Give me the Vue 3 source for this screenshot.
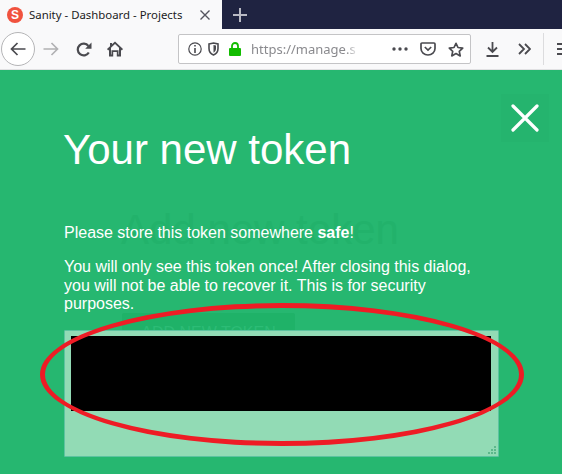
<template>
  <div class="browser">
    <!-- tab strip -->
    <div class="tabstrip">
      <div class="tab">
        <span class="favicon">S</span>
        <span class="tab-title">Sanity - Dashboard - Projects</span>
        <svg class="tab-close" width="10" height="10" viewBox="0 0 10 10">
          <path d="M0.5 0.5L9.5 9.5M9.5 0.5L0.5 9.5" stroke="#55555f" stroke-width="1.4" fill="none"/>
        </svg>
      </div>
      <svg class="new-tab" width="14" height="14" viewBox="0 0 14 14">
        <path d="M7 0V14M0 7H14" stroke="#b9bac4" stroke-width="2" fill="none"/>
      </svg>
    </div>

    <!-- toolbar -->
    <div class="toolbar">
      <div class="back-btn">
        <svg width="16" height="14" viewBox="0 0 16 14">
          <path d="M15.500 7H1.500M7.500 1L1.500 7l6 6" stroke="#4a4a4f" stroke-width="1.700" fill="none"/>
        </svg>
      </div>
      <svg class="forward" width="16" height="14" viewBox="0 0 16 14">
        <path d="M0.500 7H14.500M8.500 1L14.500 7l-6 6" stroke="#b1b1b3" stroke-width="1.700" fill="none"/>
      </svg>
      <svg class="reload" width="16" height="15" viewBox="0 0 16 15">
        <path d="M12.800 10.500A5.900 5.900 0 1 1 12.400 4" stroke="#4a4a4f" stroke-width="2.200" fill="none"/>
        <path d="M15.500 0.500V6.800H9.200Z" fill="#4a4a4f"/>
      </svg>
      <svg class="home" width="16" height="16" viewBox="0 0 16 16">
        <path d="M8 0.500L16 8 14.800 9.400 14 8.700V15.500H9.800V11H6.200V15.500H2V8.700L1.200 9.400 0 8 3 5.200V2H5V3.300ZM8 3L4 6.800V13.600H4.500V9.200H11.500V13.600H12V6.800Z" fill="#4a4a4f"/>
      </svg>

      <div class="urlbar">
        <svg class="info" width="14" height="14" viewBox="0 0 14 14">
          <circle cx="7" cy="7" r="6.200" stroke="#4a4a4f" stroke-width="1.200" fill="none"/>
          <path d="M7 6V11M7 3V4.600" stroke="#4a4a4f" stroke-width="1.600" fill="none"/>
        </svg>
        <svg class="shield" width="11" height="14" viewBox="0 0 11 14">
          <path d="M1 2L5.500 1 10 2V6.500C10 9.500 8 12 5.500 13 3 12 1 9.500 1 6.500Z" stroke="#4a4a4f" stroke-width="1.600" fill="none"/>
          <path d="M5.500 3L8 3.500V6.500C8 8.500 7 10 5.500 10.800Z" fill="#4a4a4f"/>
        </svg>
        <svg class="lock" width="12" height="14" viewBox="0 0 12 14">
          <path d="M3 6V4A3 3 0 0 1 9 4V6" stroke="#12bc00" stroke-width="1.800" fill="none"/>
          <rect x="0" y="6" width="12" height="8" rx="1" fill="#12bc00"/>
        </svg>
        <span class="url">https://manage.s</span>
        <svg class="dots" width="16" height="4" viewBox="0 0 16 4">
          <circle cx="2" cy="2" r="1.700" fill="#4a4a4f"/>
          <circle cx="8" cy="2" r="1.700" fill="#4a4a4f"/>
          <circle cx="14" cy="2" r="1.700" fill="#4a4a4f"/>
        </svg>
        <svg class="pocket" width="16" height="14" viewBox="0 0 16 14">
          <path d="M1 2Q1 1 2 1H14Q15 1 15 2V6.500A7 6.500 0 0 1 1 6.500Z" stroke="#4a4a4f" stroke-width="1.700" fill="none"/>
          <path d="M4.800 5L8 8 11.200 5" stroke="#4a4a4f" stroke-width="1.700" fill="none"/>
        </svg>
        <svg class="star" width="16" height="15" viewBox="0 0 16 15">
          <path d="M8 1.300L10 5.500 14.700 6.100 11.300 9.300 12.200 13.900 8 11.600 3.800 13.900 4.700 9.300 1.300 6.100 6 5.500Z" stroke="#4a4a4f" stroke-width="1.700" stroke-linejoin="round" fill="none"/>
        </svg>
      </div>

      <svg class="download" width="13" height="16" viewBox="0 0 13 16">
        <path d="M6.500 1V11M2 6.500L6.500 11 11 6.500M0.500 15H12.500" stroke="#4a4a4f" stroke-width="1.800" fill="none"/>
      </svg>
      <svg class="overflow" width="13" height="12" viewBox="0 0 13 12">
        <path d="M1 1L6 6 1 11M7 1L12 6 7 11" stroke="#4a4a4f" stroke-width="1.800" fill="none"/>
      </svg>
      <div class="sep"></div>
      <div class="hamburger"><i></i><i></i><i></i></div>
    </div>

    <!-- token dialog over the page -->
    <div class="dialog">
      <!-- page content showing through -->
      <div class="ghost-title">Add new token</div>
      <div class="ghost-btn">ADD NEW TOKEN</div>

      <div class="close-btn">
        <svg width="28" height="28" viewBox="0 0 28 28">
          <path d="M2 2L26 26M26 2L2 26" stroke="#fff" stroke-width="3.200" stroke-linecap="round" fill="none"/>
        </svg>
      </div>

      <h1 class="title">Your new token</h1>
      <p class="line first">Please store this token somewhere <b>safe</b>!</p>
      <p class="line second">You will only see this token once! After closing this dialog, you will not be able to recover it. This is for security purposes.</p>
      <div class="token-box">
        <div class="redacted"></div>
        <svg class="grip" width="10" height="10" viewBox="0 0 10 10">
          <path d="M7 1h2v2H7zM4 4h2v2H4zM7 4h2v2H7zM1 7h2v2H1zM4 7h2v2H4zM7 7h2v2H7z" fill="#5cb88c"/>
        </svg>
      </div>

      <!-- red annotation -->
      <div class="circle"></div>
    </div>
  </div>
</template>

<script setup>
</script>

<style>
html, body {
  margin: 0;
  background: #26b770;
}
</style>

<style scoped>
.browser {
  width: 562px;
  height: 474px;
  overflow: hidden;
  display: flex;
  flex-direction: column;
  font-family: "Liberation Sans", Arial, sans-serif;
}

/* tabs */
.tabstrip {
  height: 29px;
  flex: none;
  display: flex;
  align-items: center;
  background: #1f2341;
}
.tab {
  width: 222px;
  height: 29px;
  box-sizing: border-box;
  display: flex;
  align-items: center;
  padding-left: 7px;
  background: #f9f9fa;
}
.favicon {
  width: 16px;
  height: 16px;
  border-radius: 50%;
  background: #f0523e;
  color: #fff;
  font-size: 12px;
  font-weight: 700;
  line-height: 16px;
  text-align: center;
  flex: none;
}
.tab-title {
  margin-left: 6px;
  font-family: "Noto Sans", sans-serif;
  font-size: 11.4px;
  color: #1b1b23;
  white-space: nowrap;
  flex: none;
  width: 171px;
}
.tab-close {
  margin-left: 0;
  flex: none;
}
.new-tab {
  margin-left: 11px;
}

/* toolbar */
.toolbar {
  height: 41px;
  flex: none;
  box-sizing: border-box;
  display: flex;
  align-items: center;
  background: #f9f9fa;
  border-bottom: 1px solid #e1e1e3;
}
.back-btn {
  width: 34px;
  height: 34px;
  box-sizing: border-box;
  margin-left: 1px;
  border: 1px solid #b5b5b7;
  border-radius: 50%;
  background: #fff;
  display: flex;
  align-items: center;
  justify-content: center;
  flex: none;
}
.forward { margin-left: 8px; flex: none; }
.reload { margin-left: 17px; flex: none; }
.home { margin-left: 15px; flex: none; }

.urlbar {
  width: 293px;
  height: 30px;
  margin-left: 55px;
  box-sizing: border-box;
  border: 1px solid #c4c4c6;
  border-radius: 2px;
  background: #fff;
  display: flex;
  align-items: center;
  padding-left: 9px;
  flex: none;
}
.info { flex: none; }
.shield { margin-left: 6px; flex: none; }
.lock { margin-left: 10px; flex: none; }
.url {
  margin-left: 10px;
  width: 108px;
  font-family: "Noto Sans", sans-serif;
  font-size: 13px;
  color: #8a8a8e;
  white-space: nowrap;
  overflow: hidden;
  flex: none;
  -webkit-mask-image: linear-gradient(to right, #000 88%, transparent);
  mask-image: linear-gradient(to right, #000 88%, transparent);
}
.dots { margin-left: 33px; flex: none; }
.pocket { margin-left: 12px; flex: none; }
.star { margin-left: 12px; flex: none; }
.download { margin-left: 15px; flex: none; }
.overflow { margin-left: 19px; flex: none; }
.sep {
  width: 1px;
  height: 32px;
  margin-left: 12px;
  background: #dcdcde;
  flex: none;
}
.hamburger {
  margin-left: 13px;
  display: flex;
  flex-direction: column;
  gap: 3px;
  flex: none;
}
.hamburger i {
  display: block;
  width: 14px;
  height: 2px;
  background: #4a4a4f;
}

/* dialog */
.dialog {
  position: relative;
  flex: 1;
  background: #26b770;
  box-sizing: border-box;
  padding: 52px 63px 0 64px;
  color: #fff;
}
.ghost-title {
  position: absolute;
  left: 121px;
  top: 136px;
  font-size: 42px;
  line-height: 48px;
  color: #22b26b;
  white-space: nowrap;
}
.ghost-btn {
  position: absolute;
  left: 122px;
  top: 243px;
  width: 173px;
  height: 40px;
  border-radius: 2px;
  background: #1fb268;
  color: #2cbc76;
  font-size: 16px;
  line-height: 40px;
  text-align: center;
}
.close-btn {
  position: absolute;
  right: 13px;
  top: 24px;
  width: 48px;
  height: 48px;
  display: flex;
  align-items: center;
  justify-content: center;
  background: #25b46e;
}
.title {
  position: relative;
  margin: 0 0 0 -1px;
  font-size: 42px;
  font-weight: 400;
  line-height: 56px;
}
.line {
  position: relative;
  margin: 0;
  font-size: 16px;
  line-height: 18.4px;
}
.first { margin-top: 46px; }
.second { margin-top: 16px; }
.token-box {
  position: relative;
  margin-top: 16px;
  width: 435px;
  height: 127px;
  box-sizing: border-box;
  padding: 5px 6px;
  background: #92dbb5;
  border: 1px solid #5cc3a0;
  border-radius: 1px;
}
.redacted {
  width: 420px;
  height: 75px;
  background: #000;
}
.grip {
  position: absolute;
  right: 1px;
  bottom: 1px;
}
.circle {
  position: absolute;
  left: 40px;
  top: 233px;
  width: 484px;
  height: 143px;
  box-sizing: border-box;
  border: 5px solid #ee1c25;
  border-radius: 50%;
}
</style>
